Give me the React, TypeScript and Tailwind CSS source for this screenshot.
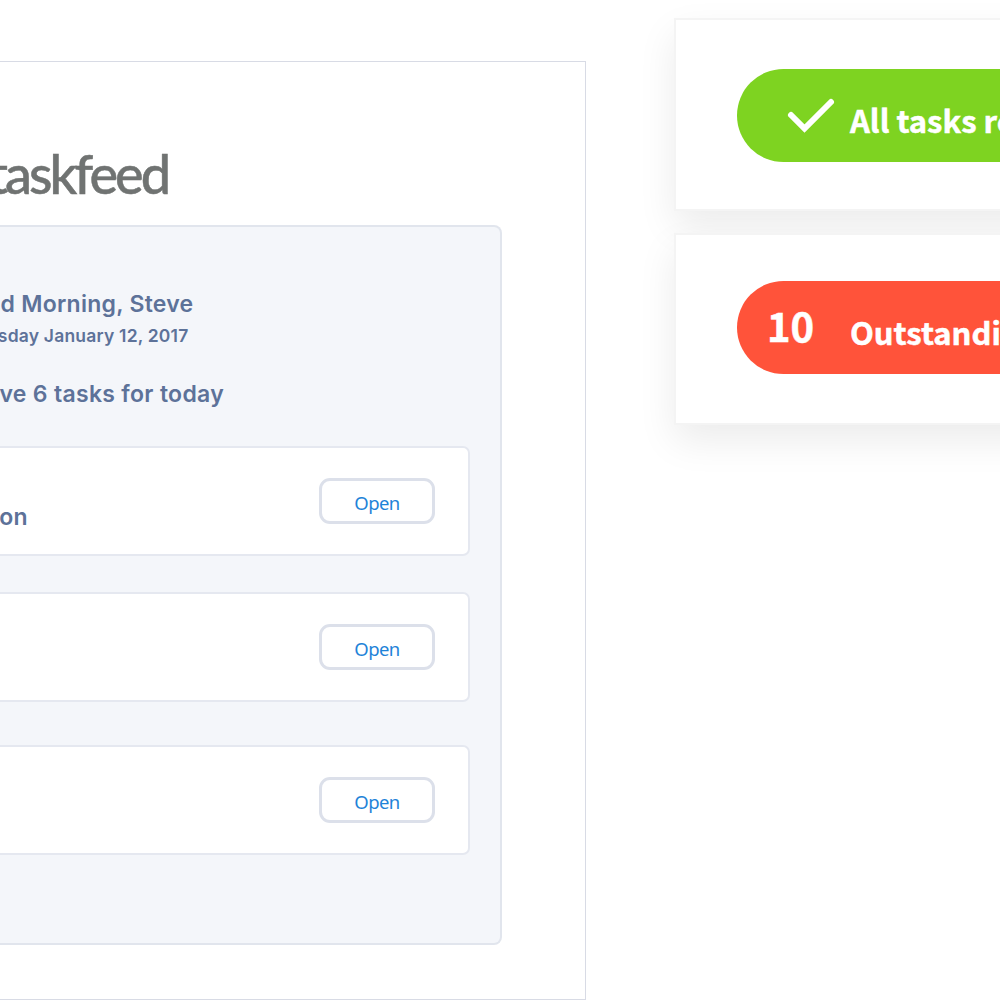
import React from "react";

function TaskCard({ label, className }: { label?: string; className: string }) {
  return (
    <div
      className={`flex h-[110px] w-[490px] shrink-0 items-start justify-between rounded-r-[7px] border-2 border-[#e5e8f0] bg-white pr-[33px] ${className}`}
    >
      <div className="flex w-[46px] justify-end pt-[53px] text-[23px] leading-[32px] font-semibold tracking-[0.3px] text-[#5d7299]">
        <span className="whitespace-nowrap">{label}</span>
      </div>
      <button className="mt-[30px] flex h-[46px] w-[116px] items-center justify-center rounded-[11px] border-[3px] border-[#dce0ea] pt-[4px] font-['Noto_Sans'] text-[18.5px] font-normal tracking-[-0.6px] text-[#1f83d8]">
        Open
      </button>
    </div>
  );
}

function StatusCard({ children, pill, className }: { children: React.ReactNode; pill: string; className: string }) {
  return (
    <section
      className={`w-[400px] shrink-0 border-2 border-[#f4f4f4] bg-white pl-[61px] shadow-[0_16px_36px_rgba(0,0,0,0.08)] ${className}`}
    >
      <div
        className={`flex h-[93px] w-[338px] items-start rounded-l-full font-bold whitespace-nowrap text-white [-webkit-text-stroke:0.5px_white] ${pill}`}
      >
        {children}
      </div>
    </section>
  );
}

export default function App() {
  return (
    <div className="flex h-[1000px] w-[1000px] overflow-hidden bg-white font-['Inter',sans-serif]">
      <main className="mt-[61px] h-[939px] w-[586px] shrink-0 border-y border-r border-[#d8dbe5]">
        <div className="flex h-[163px] w-[168px] items-start justify-end pt-[77px] font-['Lato'] text-[54px] leading-[70px] font-medium tracking-[-3px] text-[#707372] [-webkit-text-stroke:0.5px_#707372]">
          <span className="whitespace-nowrap">taskfeed</span>
        </div>
        <div className="flex h-[720px] w-[502px] flex-col items-start rounded-r-[8px] border-2 border-l-0 border-[#e1e5ed] bg-[#f4f6fa] font-semibold text-[#5d7299]">
          <div className="flex w-[193.5px] justify-end pt-[61px] text-[23px] leading-[32px] tracking-[0.27px]">
            <span className="whitespace-nowrap">Good Morning, Steve</span>
          </div>
          <div className="flex w-[188.5px] justify-end pt-[4px] text-[17.5px] leading-[24px] tracking-[0.2px]">
            <span className="whitespace-nowrap">Thursday January 12, 2017</span>
          </div>
          <div className="flex w-[224px] justify-end pt-[30px] text-[23px] leading-[32px] tracking-[0.3px]">
            <span className="whitespace-nowrap">You have 6 tasks for today</span>
          </div>
          <TaskCard label="Presentation" className="-ml-[20px] mt-[36px]" />
          <TaskCard className="-ml-[20px] mt-[36px]" />
          <TaskCard className="-ml-[20px] mt-[43px]" />
        </div>
      </main>
      <aside className="ml-[88px] flex shrink-0 flex-col font-['Noto_Sans_CJK_SC',sans-serif]">
        <StatusCard className="mt-[18px] h-[193px] pt-[49px]" pill="bg-[#7ed321]">
          <svg
            className="mt-[28px] ml-[49px] h-[38px] w-[50px] shrink-0"
            viewBox="0 0 50 38"
            fill="none"
            stroke="white"
            strokeWidth="6"
            strokeLinecap="round"
          >
            <path d="M5 18 L18.5 31.5 L45 5" />
          </svg>
          <span className="ml-[14px] pt-[26px] text-[31px] leading-[50px]">All tasks resolved</span>
        </StatusCard>
        <StatusCard className="mt-[22px] h-[192px] pt-[46px]" pill="bg-[#ff533a]">
          <span className="ml-[30px] w-[83px] shrink-0 pt-[17px] text-[40px] leading-[54px]">10</span>
          <span className="pt-[26px] text-[31px] leading-[50px]">Outstanding</span>
        </StatusCard>
      </aside>
    </div>
  );
}
